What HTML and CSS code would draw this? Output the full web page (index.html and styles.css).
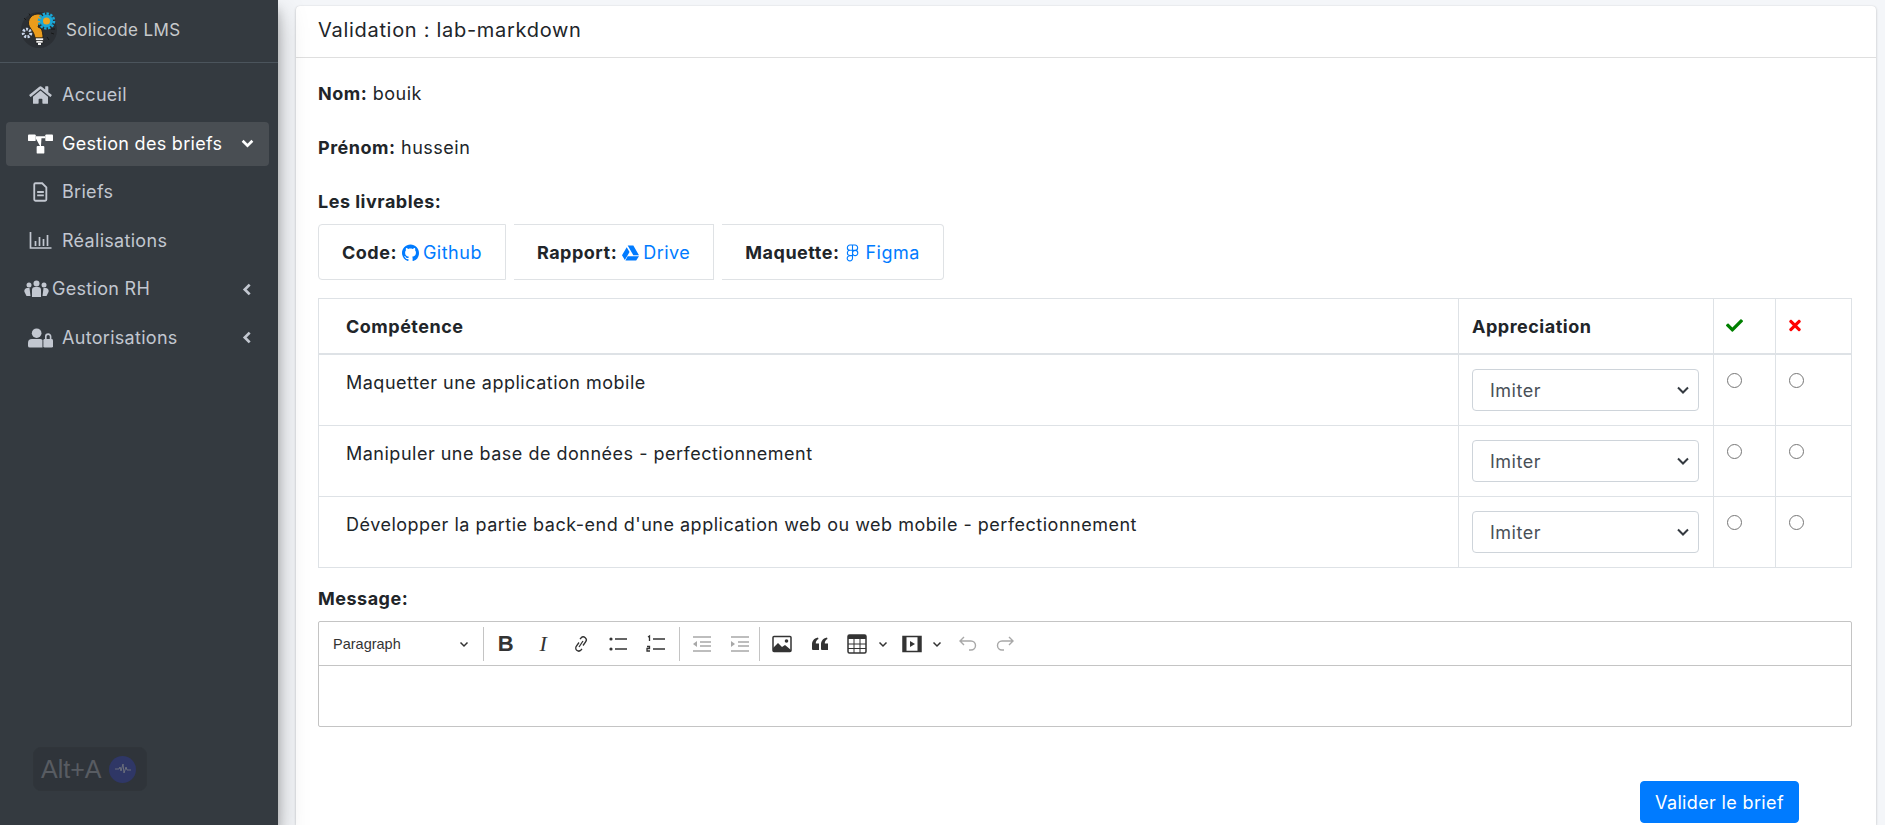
FILE: index.html
```html
<!DOCTYPE html>
<html lang="fr">
<head>
    <meta charset="UTF-8">
    <title>Validation : lab-markdown</title>
    <link rel="stylesheet" href="styles.css">
</head>
<body>
<div class="app">
    <aside class="sidebar">
        <div class="brand">
            <svg class="brand-logo" viewBox="0 0 36 36">
                <circle cx="18" cy="18" r="18" fill="#2b2f34"/>
                <circle cx="6" cy="21" r="3.800" fill="none" stroke="#c9d6ea" stroke-width="3" stroke-dasharray="2 1.300"/>
                <path d="M17 2c-5.500 0-9.500 4-9.500 9 0 5 5.500 7.500 6.500 15h8c0-3.500-.5-7-2-9.500l-3-1.500 1-3 3-1V3c-1-.7-2.500-1-4-1z" fill="#eb9c1c" stroke="#1d1d1d" stroke-width=".9"/>
                <rect x="14.500" y="26" width="8" height="2.500" fill="#f2f2f2" stroke="#1d1d1d" stroke-width=".6"/>
                <rect x="15" y="28.500" width="7" height="2.500" fill="#f2f2f2" stroke="#1d1d1d" stroke-width=".6"/>
                <rect x="17" y="31" width="3" height="2" fill="#f2f2f2"/>
                <circle cx="25.500" cy="9" r="5" fill="#f0a51f" stroke="#1aa7d6" stroke-width="3"/>
                <circle cx="25.500" cy="9" r="7.500" fill="none" stroke="#1aa7d6" stroke-width="2.500" stroke-dasharray="2.400 1.500"/>
                <path d="M3 6l2 2M8 1.500l1 2M30 21l3 1M26 25l2 3M30 17h4" stroke="#111" stroke-width=".8"/>
            </svg>
            <span>Solicode LMS</span>
        </div>
        <nav class="nav">
            <a class="nav-item">
                <svg class="nav-icon" viewBox="0 0 576 512"><path fill="currentColor" d="M280.37 148.26L96 300.11V464a16 16 0 0 0 16 16l112.06-.29a16 16 0 0 0 15.92-16V368a16 16 0 0 1 16-16h64a16 16 0 0 1 16 16v95.64a16 16 0 0 0 16 16.05L464 480a16 16 0 0 0 16-16V300L295.67 148.26a12.19 12.19 0 0 0-15.3 0zM571.6 251.47L488 182.56V44.05a12 12 0 0 0-12-12h-56a12 12 0 0 0-12 12v72.61L318.47 43a48 48 0 0 0-61 0L4.34 251.47a12 12 0 0 0-1.6 16.9l25.5 31A12 12 0 0 0 45.15 301l235.22-193.74a12.19 12.19 0 0 1 15.3 0L530.9 301a12 12 0 0 0 16.9-1.6l25.5-31a12 12 0 0 0-1.7-16.93z"/></svg>
                <span>Accueil</span>
            </a>
            <a class="nav-item active">
                <svg class="nav-icon" viewBox="0 0 26 20"><g fill="currentColor"><rect x="0" y="0" width="8" height="7" rx="1"/><rect x="18" y="0" width="8" height="7" rx="1"/><rect x="9" y="12" width="8" height="8" rx="1"/><path d="M8 2h10v2H14l-.5 8h-1L8 4z"/></g></svg>
                <span>Gestion des briefs</span>
                <svg class="nav-arrow" viewBox="0 0 12 12"><path d="M1.500 3.500L6 8l4.500-4.500" fill="none" stroke="currentColor" stroke-width="2.500"/></svg>
            </a>
            <a class="nav-item">
                <svg class="nav-icon" viewBox="0 0 24 24"><path fill="none" stroke="currentColor" stroke-width="2.200" d="M6 1.500h8l5 5V21a1.500 1.500 0 0 1-1.500 1.500h-11.500A1.500 1.500 0 0 1 4.500 21V3A1.500 1.500 0 0 1 6 1.500zM8 12h8M8 16h8"/></svg>
                <span>Briefs</span>
            </a>
            <a class="nav-item">
                <svg class="nav-icon" viewBox="0 0 24 20"><path fill="none" stroke="currentColor" stroke-width="1.700" d="M2 1v16h21M7 15v-5M11 15V6M15 15V8M19 15V4"/></svg>
                <span>Réalisations</span>
            </a>
            <a class="nav-item nav-item-wide">
                <svg class="nav-icon" viewBox="0 0 24 20"><g fill="currentColor"><circle cx="4.500" cy="6" r="2.500"/><circle cx="12" cy="4.500" r="3"/><circle cx="19.500" cy="6" r="2.500"/><path d="M0 13a3 3 0 0 1 3-4h2l1 8H2zM7.500 11a3 3 0 0 1 3-3h3a3 3 0 0 1 3 3v7h-9zM24 13a3 3 0 0 0-3-4h-2l-1 8h4z"/></g></svg>
                <span>Gestion RH</span>
                <svg class="nav-arrow" viewBox="0 0 12 12"><path d="M8 1.500L3.500 6 8 10.500" fill="none" stroke="currentColor" stroke-width="2.500"/></svg>
            </a>
            <a class="nav-item">
                <svg class="nav-icon" viewBox="0 0 26 20"><g fill="currentColor"><circle cx="9" cy="5" r="5"/><path d="M0 18v-3a4 4 0 0 1 4-4h9a4 4 0 0 1 2 1v8H2a2 2 0 0 1-2-2z"/><rect x="16" y="11" width="10" height="9" rx="1.500"/></g><path d="M18.500 11V8.500a2.500 2.500 0 0 1 5 0V11" fill="none" stroke="currentColor" stroke-width="1.700"/></svg>
                <span>Autorisations</span>
                <svg class="nav-arrow" viewBox="0 0 12 12"><path d="M8 1.500L3.500 6 8 10.500" fill="none" stroke="currentColor" stroke-width="2.500"/></svg>
            </a>
        </nav>
        <div class="alt-badge">
            <span>Alt+A</span>
            <span class="alt-dot">
                <svg viewBox="0 0 16 10" width="16" height="10"><path d="M0 5h4l1-2 1 4 2-7 1 9 2-6 1 3h4" fill="none" stroke="#6b6f7c" stroke-width="1"/></svg>
            </span>
        </div>
    </aside>

    <main class="content">
        <section class="card">
            <header class="card-header">Validation : lab-markdown</header>
            <div class="card-body">
                <p class="line"><b>Nom:</b> bouik</p>
                <p class="line"><b>Prénom:</b> hussein</p>
                <p class="line line-tight"><b>Les livrables:</b></p>

                <div class="deliverables">
                    <div class="deliverable first">
                        <b>Code:</b>
                        <a class="link">
                            <svg class="link-icon" viewBox="0 0 16 16"><path fill="currentColor" d="M8 0C3.580 0 0 3.580 0 8c0 3.540 2.290 6.530 5.470 7.590.4.070.55-.17.55-.38 0-.19-.01-.82-.01-1.490-2.010.37-2.530-.49-2.690-.94-.09-.23-.48-.94-.82-1.130-.28-.15-.68-.52-.01-.53.63-.01 1.080.58 1.230.82.72 1.210 1.870.87 2.330.66.07-.52.28-.87.51-1.070-1.780-.2-3.640-.89-3.640-3.950 0-.87.31-1.590.82-2.150-.08-.2-.36-1.020.08-2.120 0 0 .67-.21 2.200.82.64-.18 1.320-.27 2-.27.68 0 1.360.09 2 .27 1.530-1.040 2.200-.82 2.200-.82.44 1.100.16 1.920.08 2.120.51.56.82 1.270.82 2.150 0 3.070-1.870 3.750-3.650 3.950.29.25.54.73.54 1.480 0 1.070-.01 1.930-.01 2.200 0 .21.15.46.55.38A8.013 8.013 0 0 0 16 8c0-4.420-3.580-8-8-8z"/></svg>
                            Github
                        </a>
                    </div>
                    <div class="deliverable">
                        <b>Rapport:</b>
                        <a class="link">
                            <svg class="link-icon" viewBox="0 0 18 16"><path fill="currentColor" d="M6 0h6l6 10.500h-6zM5 1.800L8 7 3 15.500 0 10.500zM6 11.500h12l-3 4.500H3.600z"/></svg>
                            Drive
                        </a>
                    </div>
                    <div class="deliverable last">
                        <b>Maquette:</b>
                        <a class="link">
                            <svg class="link-icon" viewBox="0 0 12 18"><path fill="none" stroke="currentColor" stroke-width="1.100" d="M6 1H3.500a2.600 2.600 0 0 0 0 5.300H6zM6 1h2.500a2.600 2.600 0 0 1 0 5.300H6zM6 6.300H3.500a2.600 2.600 0 0 0 0 5.300H6zM6 9a2.650 2.650 0 1 0 5.300 0A2.650 2.650 0 0 0 6 9zM6 11.600H3.500A2.650 2.650 0 1 0 6 14.200z"/></svg>
                            Figma
                        </a>
                    </div>
                </div>

                <table class="skills">
                    <thead>
                        <tr>
                            <th class="col-name">Compétence</th>
                            <th class="col-select">Appreciation</th>
                            <th class="col-ok"><svg class="head-icon ok" viewBox="0 0 512 512"><path fill="currentColor" d="M173.898 439.404l-166.400-166.400c-9.997-9.997-9.997-26.206 0-36.204l36.203-36.204c9.997-9.998 26.207-9.998 36.204 0L192 312.690 432.095 72.596c9.997-9.997 26.207-9.997 36.204 0l36.203 36.204c9.997 9.997 9.997 26.206 0 36.204l-294.400 294.401c-9.998 9.997-26.207 9.997-36.204-.001z"/></svg></th>
                            <th class="col-ko"><svg class="head-icon ko" viewBox="0 0 352 512"><path fill="currentColor" d="M242.720 256l100.070-100.070c12.280-12.280 12.280-32.190 0-44.480l-22.240-22.240c-12.280-12.280-32.190-12.280-44.480 0L176 189.280 75.930 89.210c-12.280-12.280-32.190-12.280-44.480 0L9.210 111.450c-12.280 12.280-12.280 32.190 0 44.480L109.280 256 9.210 356.070c-12.280 12.280-12.280 32.190 0 44.480l22.240 22.240c12.280 12.280 32.200 12.280 44.480 0L176 322.720l100.070 100.070c12.280 12.280 32.200 12.280 44.480 0l22.240-22.240c12.280-12.280 12.280-32.190 0-44.480L242.720 256z"/></svg></th>
                        </tr>
                    </thead>
                    <tbody>
                        <tr>
                            <td class="col-name">Maquetter une application mobile</td>
                            <td class="col-select"><select class="select"><option>Imiter</option></select></td>
                            <td class="col-ok"><input type="radio" name="r1"></td>
                            <td class="col-ko"><input type="radio" name="r1"></td>
                        </tr>
                        <tr>
                            <td class="col-name">Manipuler une base de données - perfectionnement</td>
                            <td class="col-select"><select class="select"><option>Imiter</option></select></td>
                            <td class="col-ok"><input type="radio" name="r2"></td>
                            <td class="col-ko"><input type="radio" name="r2"></td>
                        </tr>
                        <tr>
                            <td class="col-name">Développer la partie back-end d'une application web ou web mobile - perfectionnement</td>
                            <td class="col-select"><select class="select"><option>Imiter</option></select></td>
                            <td class="col-ok"><input type="radio" name="r3"></td>
                            <td class="col-ko"><input type="radio" name="r3"></td>
                        </tr>
                    </tbody>
                </table>

                <p class="line line-tight msg-label"><b>Message:</b></p>
                <div class="editor">
                    <div class="toolbar">
                        <div class="tb-heading">
                            <span>Paragraph</span>
                            <svg class="tb-caret" viewBox="0 0 10 10"><path d="M1.500 3.500L5 7l3.500-3.500" fill="none" stroke="currentColor" stroke-width="1.500"/></svg>
                        </div>
                        <i class="tb-sep"></i>
                        <span class="tb-btn tb-bold">B</span>
                        <span class="tb-btn tb-italic">I</span>
                        <span class="tb-btn"><svg viewBox="0 0 20 20"><path d="M8 8.500l-2.500 3.500a3 3 0 0 0 4.500 4l1-1.200M12 11.500l2.500-3.500a3 3 0 0 0-4.500-4l-1 1.200M8 13l4-6" fill="none" stroke="currentColor" stroke-width="1.300"/></svg></span>
                        <span class="tb-btn"><svg viewBox="0 0 20 20"><circle cx="3" cy="5" r="1.600" fill="currentColor"/><circle cx="3" cy="15" r="1.600" fill="currentColor"/><path d="M7 5h12M7 15h12" stroke="currentColor" stroke-width="1.500"/></svg></span>
                        <span class="tb-btn"><svg viewBox="0 0 20 20"><path d="M2 3l1.500-1v5M1 12.500h2.500v2H1v2.500h3M7 5h12M7 15h12" fill="none" stroke="currentColor" stroke-width="1.300"/></svg></span>
                        <i class="tb-sep"></i>
                        <span class="tb-btn off"><svg viewBox="0 0 20 20"><path d="M1 3h18M8 8h11M8 12h11M1 17h18" stroke="currentColor" stroke-width="1.500"/><path d="M1 10l4-3v6z" fill="currentColor"/></svg></span>
                        <span class="tb-btn off"><svg viewBox="0 0 20 20"><path d="M1 3h18M8 8h11M8 12h11M1 17h18" stroke="currentColor" stroke-width="1.500"/><path d="M5 10L1 7v6z" fill="currentColor"/></svg></span>
                        <i class="tb-sep tb-sep-near"></i>
                        <span class="tb-btn"><svg viewBox="0 0 20 20"><rect x="1" y="2.500" width="18" height="15" rx="1" fill="none" stroke="currentColor" stroke-width="1.500"/><circle cx="14.500" cy="7" r="1.800" fill="currentColor"/><path d="M1 17v-3l5-5 4 4 3-2 6 5v1z" fill="currentColor"/></svg></span>
                        <span class="tb-btn"><svg viewBox="0 0 20 20"><path d="M3 16a1 1 0 0 1-1-1v-4c0-4 1.500-6.500 6-7.500l.5 1.500C6.500 6 5.800 7.500 5.800 9.500H9v6.500zM12 16a1 1 0 0 1-1-1v-4c0-4 1.500-6.500 6-7.500l.5 1.500c-2 1-2.700 2.500-2.700 4.500H18v6.500z" fill="currentColor"/></svg></span>
                        <span class="tb-btn"><svg viewBox="0 0 20 20"><rect x="1" y="1" width="18" height="18" rx="1.500" fill="none" stroke="currentColor" stroke-width="1.500"/><rect x="1" y="1" width="18" height="4" fill="currentColor"/><path d="M7 5v14M13 5v14M1 10h18M1 14.500h18" stroke="currentColor" stroke-width="1"/></svg></span>
                        <svg class="tb-caret tb-caret-small" viewBox="0 0 10 10"><path d="M1.500 3.500L5 7l3.500-3.500" fill="none" stroke="currentColor" stroke-width="1.500"/></svg>
                        <span class="tb-btn tb-narrow"><svg viewBox="0 0 20 20"><rect x="1" y="2.500" width="18" height="15" fill="none" stroke="currentColor" stroke-width="1.500"/><path d="M1 3h3.500v14H1zM15.500 3H19v14h-3.500z" fill="currentColor"/><path d="M8 7l5 3-5 3z" fill="currentColor"/></svg></span>
                        <svg class="tb-caret tb-caret-small" viewBox="0 0 10 10"><path d="M1.500 3.500L5 7l3.500-3.500" fill="none" stroke="currentColor" stroke-width="1.500"/></svg>
                        <span class="tb-btn off tb-undo"><svg viewBox="0 0 20 20"><path d="M6 3L2 7l4 4M2 7h11a4.500 4.500 0 0 1 0 9h-2" fill="none" stroke="currentColor" stroke-width="1.400"/></svg></span>
                        <span class="tb-btn off"><svg viewBox="0 0 20 20"><path d="M14 3l4 4-4 4M18 7H7a4.500 4.500 0 0 0 0 9h2" fill="none" stroke="currentColor" stroke-width="1.400"/></svg></span>
                    </div>
                    <div class="editor-area"></div>
                </div>

                <div class="actions">
                    <button class="btn">Valider le brief</button>
                </div>
            </div>
        </section>
    </main>
</div>
</body>
</html>
```

FILE: styles.css
```css
*{box-sizing:border-box;}
html,body{margin:0;height:100%;overflow:hidden;}
body{font:18px/24px Inter,"Noto Sans",sans-serif;letter-spacing:.5px;color:#212529;background:#f4f6f9;}
.app{display:flex;height:825px;}

/* sidebar */
.sidebar{
    position:relative;
    width:278px;
    flex-shrink:0;
    background:#343a40;
    box-shadow:0 14px 28px rgba(0,0,0,.25),0 10px 10px rgba(0,0,0,.22);
    z-index:2;
}
.brand{
    height:63px;
    display:flex;
    align-items:center;
    padding:0 0 2px 21px;
    gap:9px;
    color:#c8cacc;
    font-size:17px;
    letter-spacing:.35px;
    border-bottom:1px solid #4b545c;
}
.brand-logo{width:36px;height:36px;}
.nav{padding:10px 9px 0 6px;display:flex;flex-direction:column;gap:4px;}
.nav-item{
    height:44.500px;
    display:flex;
    align-items:center;
    padding:0 12px 0 22px;
    color:#c2c7d0;
    border-radius:4px;
    font-size:18px;
    letter-spacing:.3px;
}
.nav-item.active{background:#494e53;color:#fff;}
.nav-item span{flex:1;}
.nav-icon{width:25px;height:20px;margin-right:9px;flex-shrink:0;}
.nav-item-wide{padding-left:18px;}
.nav-item-wide .nav-icon{margin-right:3px;}
.nav-arrow{width:13px;height:13px;margin-right:3px;flex-shrink:0;}

.alt-badge{
    position:absolute;
    left:33px;
    top:747px;
    width:114px;
    height:44px;
    display:flex;
    align-items:center;
    gap:8px;
    padding-left:7px;
    background:#2f343a;
    border:1px solid #30353a;
    border-radius:8px;
    color:#585c62;
    font:25px "Liberation Sans",sans-serif;
    letter-spacing:0;
}
.alt-dot{
    width:27px;
    height:27px;
    border-radius:50%;
    background:#2f3766;
    display:flex;
    align-items:center;
    justify-content:center;
}

/* content */
.content{flex:1;padding:6px 9px 0 18px;min-width:0;}
.card{background:#fff;border-radius:4px 4px 0 0;height:100%;box-shadow:0 0 1px rgba(0,0,0,.125),0 1px 3px rgba(0,0,0,.2);}
.card-header{
    height:52px;
    padding:0 22px;
    font-size:20px;
    letter-spacing:.7px;
    line-height:49px;
    border-bottom:1px solid #dfdfdf;
}
.card-body{padding:24px 22px 0;}
.line{margin:0 0 30px;}
.line-tight{margin-bottom:10px;}
.line b{font-weight:700;}

.deliverables{display:flex;gap:8px;margin-bottom:18px;}
.deliverable{
    height:56px;
    display:flex;
    align-items:center;
    gap:5px;
    padding:2px 23px 0;
    border:1px solid #dfe2e5;
    border-left-width:0;
    border-right-width:1px;
}
.deliverable b{font-weight:700;}
.deliverable.first{border-left-width:1px;border-radius:4px 0 0 4px;}
.deliverable.last{border-radius:0 4px 4px 0;}
.link{color:#007bff;display:inline-flex;align-items:center;gap:4px;}
.link-icon{width:17px;height:18px;}

/* table */
.skills{width:1533px;border-collapse:collapse;table-layout:fixed;}
.skills th,.skills td{border:1px solid #dee2e6;padding:14px 13px;text-align:left;vertical-align:top;}
.skills th{height:55px;padding-top:16px;border-bottom-width:2px;font-weight:700;}
.skills .col-name{width:1140px;padding-left:27px;}
.skills .col-select{width:255px;}
.skills .col-ok{width:62px;padding-left:12px;}
.skills .col-ko{width:76px;padding-left:12px;}
.skills td.col-name{padding-top:16px;}
.head-icon{height:17px;display:block;margin-top:2px;}
.ok{color:green;width:17px;}
.ko{color:red;width:14px;}
.select{
    display:block;
    width:227px;
    height:42px;
    padding:0 14px 0 17px;
    font:18px Inter,"Noto Sans",sans-serif;
    letter-spacing:.5px;
    color:#495057;
    appearance:none;
    background:#fff url("data:image/svg+xml,%3Csvg xmlns='http://www.w3.org/2000/svg' viewBox='0 0 12 8'%3E%3Cpath d='M1 1.500l5 5 5-5' fill='none' stroke='%23343a40' stroke-width='2'/%3E%3C/svg%3E") no-repeat right 9px center/12px 8px;
    border:1px solid #ced4da;
    border-radius:4px;
}
.skills input{margin:4px 0 0 1px;display:block;width:15px;height:15px;}

/* editor */
.msg-label{margin-top:19px;}
.editor{width:1534px;border:1px solid #c4c4c4;border-radius:2px;margin-top:1px;letter-spacing:0;}
.toolbar{
    height:44px;
    display:flex;
    align-items:center;
    padding-left:14px;
    border-bottom:1px solid #c4c4c4;
    color:#333;
}
.tb-heading{
    width:150px;
    display:flex;
    align-items:center;
    justify-content:space-between;
    padding-right:14px;
    font:14.500px "Liberation Sans",sans-serif;
}
.tb-caret{width:10px;height:10px;flex-shrink:0;}
.tb-caret-small{margin:0 6px 0 2px;}
.tb-sep{width:1px;height:34px;background:#c4c4c4;margin:0 4px;}
.tb-heading + .tb-sep{margin:0 3px 0 0;}
.tb-sep-near{margin:0 4px 0 0;}
.tb-btn{width:37.500px;display:flex;justify-content:center;align-items:center;height:34px;}
.tb-btn svg{width:20px;height:20px;}
.tb-narrow{width:36px;}
.tb-undo{margin-left:1px;}
.tb-bold{font:700 22px "Liberation Sans",sans-serif;}
.tb-italic{font:italic 22px "Liberation Serif",serif;}
.off{color:#a8a8a8;}
.editor-area{height:60px;}

.actions{display:flex;justify-content:flex-end;padding:54px 55px 0 0;}
.btn{
    width:159px;
    height:42px;
    padding:0;
    font:18px Inter,"Noto Sans",sans-serif;
    letter-spacing:.35px;
    color:#fff;
    background:#007bff;
    border:1px solid #007bff;
    border-radius:4px;
}
```
